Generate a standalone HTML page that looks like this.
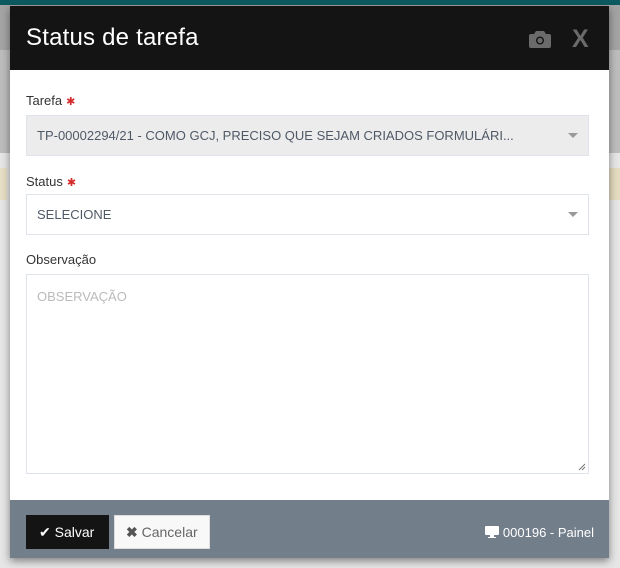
<!DOCTYPE html>
<html><head><meta charset="utf-8"><style>
*{box-sizing:border-box;margin:0;padding:0}
body{width:620px;height:568px;overflow:hidden;background:#e6e6e6;font-family:"Liberation Sans",sans-serif;position:relative}
.top{position:absolute;left:0;top:0;width:620px;height:5px;background:#0d5b61}
.band{position:absolute;left:0;top:5px;width:620px;height:45px;background:#a4a4a4}
.bg2{position:absolute;left:0;top:50px;width:620px;height:103px;background:#bdbdbd}
.y1{position:absolute;left:609px;top:168px;width:11px;height:32px;background:#e5dcc0}
.y2{position:absolute;left:0;top:168px;width:7px;height:32px;background:#e8dfc4}
.modal{position:absolute;left:10px;top:6px;width:599px;height:552px;background:#fff;box-shadow:0 3px 8px rgba(0,0,0,.45)}
.hd{height:64px;background:#141414;position:relative}
.hd h1{position:absolute;left:16px;top:18px;font-weight:normal;font-size:24px;color:#fff;letter-spacing:0.2px}
.x{position:absolute;left:562px;top:19px;font-size:25px;font-weight:bold;color:#6a6a6a}
.lbl{position:absolute;left:16px;font-size:13px;color:#333}
.req{color:#d42a2a;font-size:11px;margin-left:4px}
.sel{position:absolute;left:16px;width:563px;height:41px;border:1px solid #dfe4ea;font-size:13px;color:#4f5966;padding:12px 0 0 10px;white-space:nowrap}
.car{position:absolute;right:10px;top:17px;width:0;height:0;border-left:5px solid transparent;border-right:5px solid transparent;border-top:5px solid #999}
.ta{position:absolute;left:16px;top:268px;width:563px;height:200px;border:1px solid #dfe4ea;font-size:13px;color:#bbb;padding:14px 10px}
.ft{position:absolute;left:0;top:494px;width:599px;height:58px;background:#737e8b}
.b1{position:absolute;left:16px;top:15px;width:83px;height:34px;background:#141414;color:#fff;font-size:14px;padding:9px 0 0 13px}
.b2{position:absolute;left:104px;top:15px;width:96px;height:34px;background:#f8f8f8;border:1px solid #ddd;color:#666;font-size:14px;padding:8px 0 0 11px}
.rt{position:absolute;right:15px;top:25px;color:#fff;font-size:13px}
</style></head><body>
<div class="top"></div><div class="band"></div><div class="bg2"></div><div class="y1"></div><div class="y2"></div>
<div class="modal">
<div class="hd"><h1>Status de tarefa</h1>
<svg style="position:absolute;left:519px;top:24px" width="22" height="18" viewBox="0 0 22 18"><path d="M7 1h8l2 3h3a2 2 0 0 1 2 2v10a2 2 0 0 1-2 2H2a2 2 0 0 1-2-2V6a2 2 0 0 1 2-2h3z" fill="#6a6a6a"/><circle cx="11" cy="10.5" r="4" fill="#141414"/><circle cx="11" cy="10.5" r="2.6" fill="#6a6a6a"/></svg>
<div class="x">X</div></div>
<div class="lbl" style="top:87px">Tarefa<span class="req">✱</span></div>
<div class="sel" style="top:109px;background:#ececec">TP-00002294/21 - COMO GCJ, PRECISO QUE SEJAM CRIADOS FORMULÁRI...<div class="car"></div></div>
<div class="lbl" style="top:168px">Status<span class="req">✱</span></div>
<div class="sel" style="top:188px;background:#fff">SELECIONE<div class="car"></div></div>
<div class="lbl" style="top:246px">Observação</div>
<div class="ta">OBSERVAÇÃO
<svg style="position:absolute;right:2px;bottom:2px" width="8" height="8"><path d="M1 7L7 1M4 7L7 4" stroke="#777" stroke-width="1"/></svg></div>
<div class="ft">
<div class="b1">✔ Salvar</div>
<div class="b2"><b style="color:#555">✖</b> Cancelar</div>
<div class="rt"><svg width="14" height="12" viewBox="0 0 14 12" style="vertical-align:-1px"><rect x="0" y="0" width="14" height="9" rx="1" fill="#fff"/><rect x="5" y="9" width="4" height="2" fill="#fff"/><rect x="3" y="11" width="8" height="1" fill="#fff"/></svg> 000196 - Painel</div>
</div>
</div>
</body></html>
